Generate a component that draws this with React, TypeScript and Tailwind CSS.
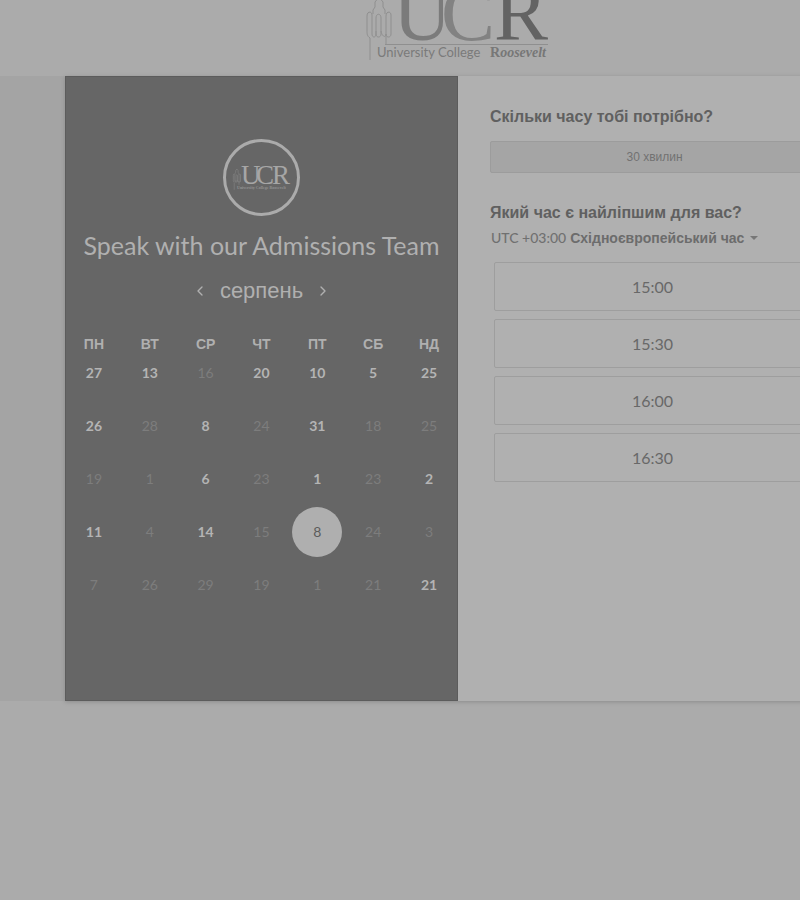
import { ChevronLeft, ChevronRight } from "lucide-react";

type Day = { n: number; open?: boolean; selected?: boolean };

const open = (n: number): Day => ({ n, open: true });
const off = (n: number): Day => ({ n });

const weekdays = ["ПН", "ВТ", "СР", "ЧТ", "ПТ", "СБ", "НД"];

const weeks: Day[][] = [
  [open(27), open(13), off(16), open(20), open(10), open(5), open(25)],
  [open(26), off(28), open(8), off(24), open(31), off(18), off(25)],
  [off(19), off(1), open(6), off(23), open(1), off(23), open(2)],
  [open(11), off(4), open(14), off(15), { n: 8, open: true, selected: true }, off(24), off(3)],
  [off(7), off(26), off(29), off(19), off(1), off(21), open(21)],
];

const times = ["15:00", "15:30", "16:00", "16:30"];

function Towers() {
  return (
    <path
      d="M4 60V38M4 38C1 36 1 34 1 30V16C1 11 6 11 6 15V34C6 38 10 38 10 34V31M7 14V10L9 7V2L13 -3L17 2V7L19 10V14M10 34V18C10 13 15 13 15 18V34C15 38 10 38 10 34M15 31C16 37 20 38 20 34V16C20 11 25 11 25 15V34C25 38 20 38 20 34V45"
      fill="none"
      stroke="currentColor"
    />
  );
}

function HeaderLogo() {
  return (
    <svg
      width="184"
      height="64"
      viewBox="0 0 184 64"
      role="img"
      aria-label="University College Roosevelt"
      className="text-[#8f8f8f]"
    >
      <Towers />
      <g fontFamily="'Liberation Serif', serif" fontSize="81">
        <text x="27" y="40" fill="#7b7b7b">U</text>
        <text x="75" y="40" fill="#828282">C</text>
        <text x="128" y="40" fill="#636363">R</text>
      </g>
      <path d="M19 44.5H182" stroke="#8f8f8f" />
      <text x="11" y="57" fontFamily="Lato, sans-serif" fontSize="13" fill="#7a7a7a">
        University College
      </text>
      <text x="124" y="57" fontFamily="'Liberation Serif', serif" fontSize="14" fontWeight="700" fill="#777777">
        R<tspan fontStyle="italic">oosevelt</tspan>
      </text>
    </svg>
  );
}

function BadgeLogo() {
  return (
    <div className="flex size-[77px] items-center justify-center rounded-full border-3 border-[#ababab]">
      <svg width="60" height="30" viewBox="0 0 60 30" role="img" aria-label="UCR" className="text-[#858585]">
        <g transform="translate(1 7) scale(0.3 0.33)" strokeWidth="2">
          <Towers />
        </g>
        <g fontFamily="'Liberation Serif', serif" fontSize="27" fill="#a6a6a6">
          <text x="9" y="21">U</text>
          <text x="24" y="21">C</text>
          <text x="40" y="21">R</text>
        </g>
        <text x="5" y="26" fontFamily="'Liberation Serif', serif" fontSize="4" fontWeight="700" fill="#929292">
          University College Roosevelt
        </text>
      </svg>
    </div>
  );
}

function dayClass(day: Day) {
  if (day.selected) return "size-[50px] rounded-full bg-[#afafaf] text-sm text-[#5c5c5c]";
  if (day.open) return "size-[50px] rounded-full text-sm font-bold text-[#b4b4b4]";
  return "size-[50px] rounded-full text-sm text-[#7d7d7d]";
}

function CalendarPanel() {
  return (
    <section className="flex flex-col items-center border border-[#5c5c5c] bg-[#666666] pt-[62px] pb-[87px] text-[#b0b0b0]">
      <BadgeLogo />
      <h1 className="mt-[11px] text-[25px] leading-9 whitespace-nowrap">Speak with our Admissions Team</h1>
      <div className="mt-[10px] flex items-center gap-2">
        <button type="button" aria-label="Попередній місяць" className="flex size-6 items-center justify-center">
          <ChevronLeft size={16} strokeWidth={2} />
        </button>
        <h2 className="font-['Liberation_Sans',sans-serif] text-[22px] leading-9 font-normal">серпень</h2>
        <button type="button" aria-label="Наступний місяць" className="flex size-6 items-center justify-center">
          <ChevronRight size={16} strokeWidth={2} />
        </button>
      </div>
      <table className="mt-[31px] w-full table-fixed border-collapse text-center">
        <thead>
          <tr>
            {weekdays.map((name) => (
              <th key={name} scope="col" className="h-2 p-0 font-['Liberation_Sans',sans-serif] text-sm leading-2 font-bold">
                {name}
              </th>
            ))}
          </tr>
        </thead>
        <tbody>
          {weeks.map((week, i) => (
            <tr key={i}>
              {week.map((day, j) => (
                <td key={j} className="h-[53px] p-0 align-top">
                  <button type="button" disabled={!day.open} aria-pressed={day.selected} className={dayClass(day)}>
                    {day.n}
                  </button>
                </td>
              ))}
            </tr>
          ))}
        </tbody>
      </table>
    </section>
  );
}

function TimePanel() {
  return (
    <section className="bg-[#b0b0b0] px-8 pt-[29px] text-[#606060]">
      <h2 className="font-['Liberation_Sans',sans-serif] text-base leading-6 font-bold">Скільки часу тобі потрібно?</h2>
      <button
        type="button"
        className="mt-3 h-8 w-full rounded-xs border border-[#9c9c9c] bg-[#a5a5a5] font-['Liberation_Sans',sans-serif] text-xs text-[#727272]"
      >
        30 хвилин
      </button>
      <h2 className="mt-7 font-['Liberation_Sans',sans-serif] text-base leading-6 font-bold">
        Який час є найліпшим для вас?
      </h2>
      <div className="mt-[3px] flex h-5 items-center gap-1 pl-px text-sm whitespace-nowrap text-[#707070]">
        <label htmlFor="timezone" className="font-medium">
          UTC +03:00
        </label>
        <select
          id="timezone"
          className="appearance-none bg-transparent font-['Liberation_Sans',sans-serif] text-sm leading-5 font-bold text-[#6c6c6c]"
        >
          <option>Східноєвропейський час</option>
        </select>
        <svg width="10" height="6" viewBox="0 0 10 6" aria-hidden="true" className="fill-[#777777]">
          <path d="M1 1H9L5 5Z" />
        </svg>
      </div>
      <ul className="mt-[14px] flex flex-col gap-2 pr-2 pl-1">
        {times.map((time) => (
          <li key={time}>
            <button
              type="button"
              className="block h-[49px] w-full rounded-xs border border-[#9e9e9e] text-base text-[#686868]"
            >
              {time}
            </button>
          </li>
        ))}
      </ul>
    </section>
  );
}

export default function App() {
  return (
    <div className="min-h-screen overflow-x-hidden bg-[#ababab] font-[Lato,sans-serif]">
      <div className="min-w-[916px]">
        <header className="flex h-[76px] items-start justify-center">
          <HeaderLogo />
        </header>
        <main className="bg-[#a4a4a4] px-[65px]">
          <div className="grid grid-cols-2 shadow-[0_1px_4px_#8c8c8c]">
            <CalendarPanel />
            <TimePanel />
          </div>
        </main>
      </div>
    </div>
  );
}
